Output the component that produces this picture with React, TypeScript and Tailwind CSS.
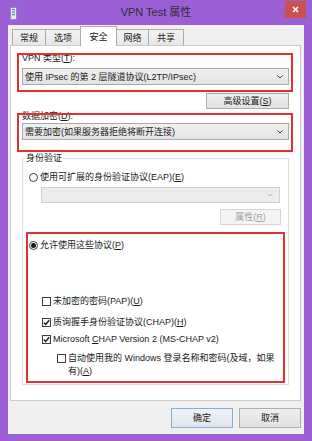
import type { ReactNode } from 'react';

function U({ children }: { children: ReactNode }) {
  return <span className="underline underline-offset-[1px]">{children}</span>;
}

function Radio({ checked }: { checked?: boolean }) {
  return (
    <span className="w-[9px] h-[9px] rounded-full border border-[#3c3c3c] bg-white flex items-center justify-center shrink-0">
      {checked && <span className="w-[5px] h-[5px] rounded-full bg-[#1a1a1a]" />}
    </span>
  );
}

function Check({ checked }: { checked?: boolean }) {
  return (
    <span className="w-[9px] h-[9px] border border-[#3c3c3c] bg-white flex items-center justify-center shrink-0">
      {checked && (
        <svg width="7" height="7" viewBox="0 0 7 7">
          <path d="M0.8 3.6 L2.7 5.5 L6.2 1.2" fill="none" stroke="#1a1a1a" strokeWidth="1.4" />
        </svg>
      )}
    </span>
  );
}

function Arrow({ color }: { color: string }) {
  return (
    <svg width="6" height="4" viewBox="0 0 6 4" className="shrink-0">
      <path d="M0.5 0.5 L3 3 L5.5 0.5" fill="none" stroke={color} strokeWidth="1" />
    </svg>
  );
}

function Combo({ text, disabled }: { text?: string; disabled?: boolean }) {
  return (
    <div
      className={
        disabled
          ? 'h-[16px] border border-[#d0d0d0] bg-[#ececec] flex items-center justify-end pr-[6px]'
          : 'h-[17px] border border-[#a9a9a9] bg-gradient-to-b from-[#f0f0f0] to-[#e3e3e6] flex items-center pl-[2px] pr-[5px]'
      }
    >
      {text && <span className="flex-1 truncate">{text}</span>}
      <Arrow color={disabled ? '#b5b5b5' : '#404040'} />
    </div>
  );
}

export default function App() {
  const tabs = ['常规', '选项', '安全', '网络', '共享'];
  const tabWidths = ['w-[34px]', 'w-[36px]', 'w-[37px]', 'w-[33px]', 'w-[36px]'];

  return (
    <div className="w-[312px] h-[441px] bg-[#9d5fd6] flex flex-col px-[8px] pb-[7px] text-[9px] leading-[14px] text-[#1a1a1a] font-['Liberation_Sans','Noto_Sans_CJK_SC',sans-serif]">
      {/* Title bar */}
      <div className="h-[25px] -mx-[8px] grid grid-cols-[1fr_auto_1fr] items-center">
        <div className="pl-[10px] pt-[1px]">
          <svg width="7" height="13" viewBox="0 0 7 13">
            <rect x="0.5" y="0.5" width="6" height="12" rx="1" fill="#dfe8f3" stroke="#7f93ad" />
            <rect x="2" y="2" width="3" height="1.2" fill="#5b86c0" />
            <rect x="2" y="4.5" width="3" height="1.2" fill="#5b86c0" />
            <rect x="2" y="7" width="3" height="1.2" fill="#5b86c0" />
          </svg>
        </div>
        <span className="text-[11px] leading-[14px] text-[#2e2e2e] -mt-[1px]">VPN Test 属性</span>
        <div className="flex justify-end self-start pt-[1px] pr-[6px]">
          <div className="w-[21px] h-[17px] bg-[#c9504f] flex items-center justify-center">
            <svg width="7" height="7" viewBox="0 0 7 7">
              <path d="M1 1 L6 6 M6 1 L1 6" stroke="#ffffff" strokeWidth="1.6" />
            </svg>
          </div>
        </div>
      </div>

      <div className="flex-1 bg-[#f0f0f0] flex flex-col">
        {/* Tabs */}
        <div className="flex items-end pl-[4px] mt-[2px] h-[18px]">
          {tabs.map((t, i) =>
            i === 2 ? (
              <div
                key={t}
                className={`${tabWidths[i]} h-[20px] -ml-px -mb-px relative z-10 bg-white border border-b-0 border-[#acacac] flex items-center justify-center`}
              >
                {t}
              </div>
            ) : (
              <div
                key={t}
                className={`${tabWidths[i]} h-[16px] ${i === 0 ? '' : '-ml-px'} bg-gradient-to-b from-[#f3f3f3] to-[#e6e6e6] border border-b-0 border-[#acacac] flex items-center justify-center`}
              >
                {t}
              </div>
            )
          )}
        </div>

        {/* Panel */}
        <div className="flex-1 ml-[2px] w-[291px] bg-white border border-[#c9c9c9] relative flex flex-col px-[11px]">
          <div className="mt-[5px]">
            VPN 类型(<U>T</U>):
          </div>
          <div className="mt-[3px]">
            <Combo text="使用 IPsec 的第 2 层隧道协议(L2TP/IPsec)" />
          </div>
          <button className="mt-[8px] self-end w-[83px] h-[16px] border border-[#adadad] bg-gradient-to-b from-[#efefef] to-[#e1e1e1] flex items-center justify-center">
            高级设置(<U>S</U>)
          </button>
          <div className="mt-0">
            数据加密(<U>D</U>):
          </div>
          <div>
            <Combo text="需要加密(如果服务器拒绝将断开连接)" />
          </div>

          <fieldset className="mt-[11px] border border-[#d5dfe5] pb-[6px] flex flex-col">
            <legend className="ml-[2px] px-[1px] leading-[14px]">身份验证</legend>
            <div className="mt-[5px] pl-[6px] flex items-center gap-[2px]">
              <Radio />
              <span>
                使用可扩展的身份验证协议(EAP)(<U>E</U>)
              </span>
            </div>
            <div className="mt-[3px] ml-[18px] mr-[8px]">
              <Combo disabled />
            </div>
            <button className="mt-[6px] mr-[7px] self-end w-[61px] h-[16px] border border-[#d5d5d5] bg-[#f4f4f4] text-[#a3a3a3] flex items-center justify-center">
              属性(<U>R</U>)
            </button>
            <div className="mt-[13px] pl-[6px] flex items-center gap-[2px]">
              <Radio checked />
              <span>
                允许使用这些协议(<U>P</U>)
              </span>
            </div>
            <div className="mt-[42px] pl-[19px] flex items-center gap-[2px]">
              <Check />
              <span>
                未加密的密码(PAP)(<U>U</U>)
              </span>
            </div>
            <div className="mt-[7px] pl-[19px] flex items-center gap-[2px]">
              <Check checked />
              <span>
                质询握手身份验证协议(CHAP)(<U>H</U>)
              </span>
            </div>
            <div className="mt-[3px] pl-[19px] flex items-center gap-[2px]">
              <Check checked />
              <span>
                Microsoft <U>C</U>HAP Version 2 (MS-CHAP v2)
              </span>
            </div>
            <div className="mt-[6px] pl-[34px] flex items-start gap-[2px] leading-[13px]">
              <span className="mt-[2px]">
                <Check />
              </span>
              <span>
                自动使用我的 Windows 登录名称和密码(及域，如果
                <br />
                有)(<U>A</U>)
              </span>
            </div>
          </fieldset>

          {/* Annotation boxes */}
          <div className="absolute left-[6px] top-[7px] w-[276px] h-[39px] border-2 border-[#e4302f]" />
          <div className="absolute left-[6px] top-[67px] w-[276px] h-[39px] border-2 border-[#e4302f]" />
          <div className="absolute left-[15px] top-[186px] w-[259px] h-[151px] border-2 border-[#e4302f]" />
        </div>

        {/* Dialog buttons */}
        <div className="mt-[7px] mb-[6px] mr-[3px] flex justify-end gap-[6px]">
          <button className="w-[62px] h-[20px] border border-[#7eb0dd] bg-gradient-to-b from-[#eef3f8] to-[#e1e4e8] flex items-center justify-center">
            确定
          </button>
          <button className="w-[62px] h-[20px] border border-[#adadad] bg-gradient-to-b from-[#efefef] to-[#e1e1e1] flex items-center justify-center">
            取消
          </button>
        </div>
      </div>
    </div>
  );
}
